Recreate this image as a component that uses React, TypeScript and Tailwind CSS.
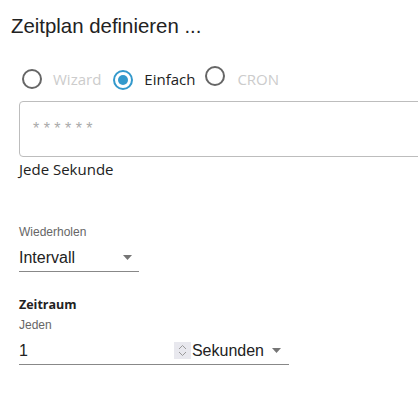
import React from "react";

const Radio = ({ checked }: { checked?: boolean }) => (
  <span
    className={`inline-flex h-[20px] w-[20px] items-center justify-center rounded-full border-2 ${
      checked ? "border-[#3399cc]" : "border-[#666666]"
    }`}
  >
    {checked && <span className="h-[10px] w-[10px] rounded-full bg-[#3399cc]" />}
  </span>
);

const Caret = () => (
  <svg width="9" height="5" viewBox="0 0 9 5">
    <path d="M0 0 L9 0 L4.5 5 Z" fill="#757575" />
  </svg>
);

export default function App() {
  return (
    <div className="w-[418px] h-[395px] overflow-hidden bg-white text-[#222]">
      <div className="pl-[11px] pt-[14px] font-['Liberation_Sans',sans-serif] text-[20.4px] leading-[24px] text-[#222]">
        Zeitplan definieren ...
      </div>
      <div className="mt-[29px] flex items-center pl-[22px] h-[24px] font-['Open_Sans',sans-serif] text-[15px]">
        <Radio />
        <span className="ml-[11px] text-[#cccccc]">Wizard</span>
        <span className="ml-[12px]"><Radio checked /></span>
        <span className="ml-[11px] text-[#222]">Einfach</span>
        <span className="ml-[10px]"><Radio /></span>
        <span className="ml-[12px] text-[#cccccc]">CRON</span>
      </div>
      <div className="ml-[19px] mt-[10px] h-[56px] w-[420px] rounded-[4px] border border-[#bdbdbd] flex items-center pl-[13px]">
        <span className="font-['Liberation_Sans',sans-serif] text-[16px] text-[#aaaaaa] whitespace-pre">* * * * * *</span>
      </div>
      <div className="ml-[19px] mt-[1px] font-['Open_Sans',sans-serif] text-[15px] leading-[22px] text-[#222]">
        Jede Sekunde
      </div>
      <div className="ml-[19px] mt-[45px] font-['Liberation_Sans',sans-serif] text-[12px] leading-[14px] text-[#666]">
        Wiederholen
      </div>
      <div className="ml-[19px] mt-[5px] w-[120px] border-b border-[#888] flex items-center justify-between h-[28px] font-['Liberation_Sans',sans-serif] text-[16px] text-[#222]">
        <span>Intervall</span>
        <span className="mr-[7px] flex"><Caret /></span>
      </div>
      <div className="ml-[19px] mt-[25px] font-['Open_Sans',sans-serif] font-bold text-[12.5px] leading-[16px] text-[#222]">
        Zeitraum
      </div>
      <div className="ml-[19px] mt-[5px] font-['Liberation_Sans',sans-serif] text-[12px] leading-[14px] text-[#666]">
        Jeden
      </div>
      <div className="ml-[19px] mt-[5px] w-[270px] border-b border-[#888] flex items-center h-[28px] font-['Liberation_Sans',sans-serif] text-[16px] text-[#222]">
        <span className="flex-1">1</span>
        <span className="flex h-[17px] w-[17px] flex-col items-center justify-center bg-[#e8e8ee]">
          <svg width="9" height="13" viewBox="0 0 9 13">
            <path d="M1 5 L4.5 1.5 L8 5" stroke="#9a9a9a" strokeWidth="1" fill="none" />
            <path d="M1 8 L4.5 11.5 L8 8" stroke="#9a9a9a" strokeWidth="1" fill="none" />
          </svg>
        </span>
        <span className="ml-[1px]">Sekunden</span>
        <span className="ml-[8px] mr-[8px] flex"><Caret /></span>
      </div>
    </div>
  );
}
